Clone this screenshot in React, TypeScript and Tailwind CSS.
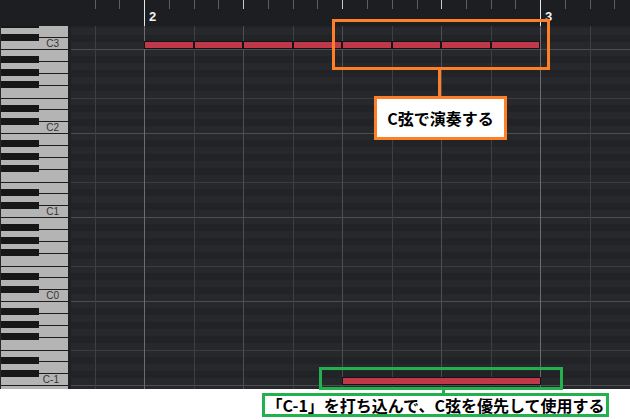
const OCTAVES = [3, 2, 1, 0, -1, -2]

// semitone rows of one octave, top to bottom
const ROWS = [
  { name: 'B', black: false },
  { name: 'A#', black: true },
  { name: 'A', black: false },
  { name: 'G#', black: true },
  { name: 'G', black: false },
  { name: 'F#', black: true },
  { name: 'F', black: false },
  { name: 'E', black: false },
  { name: 'D#', black: true },
  { name: 'D', black: false },
  { name: 'C#', black: true },
  { name: 'C', black: false },
]

const WHITE_KEYS = [
  { name: 'B', h: 'h-[12px]' },
  { name: 'A', h: 'h-[12px]' },
  { name: 'G', h: 'h-[12px]' },
  { name: 'F', h: 'h-[13px]' },
  { name: 'E', h: 'h-[11px]' },
  { name: 'D', h: 'h-[12px]' },
  { name: 'C', h: 'h-[12px]' },
]

const BLACK_KEYS = ['top-[7px]', 'top-[20px]', 'top-[32px]', 'top-[56px]', 'top-[69px]']

// grid columns (8th notes), first line at x=95, grid starts at x=71
const GRID_LEFT = 71
const COLUMNS = [
  { w: 'w-[49px]', line: 'border-[#3d3f43]' },
  { w: 'w-[50px]', line: 'border-[#6a6c70]' },
  { w: 'w-[49px]', line: 'border-[#3d3f43]' },
  { w: 'w-[50px]', line: 'border-[#4b4e52]' },
  { w: 'w-[49px]', line: 'border-[#3d3f43]' },
  { w: 'w-[50px]', line: 'border-[#4b4e52]' },
  { w: 'w-[49px]', line: 'border-[#3d3f43]' },
  { w: 'w-[50px]', line: 'border-[#4b4e52]' },
  { w: 'w-[49px]', line: 'border-[#3d3f43]' },
  { w: 'w-[50px]', line: 'border-[#6a6c70]' },
  { w: 'flex-1', line: 'border-[#3d3f43]' },
]

// ruler: 16th ticks from x=95
type Tick = { w: string; kind: 'minor' | 'beat' | 'bar'; label?: string }
const TICKS: Tick[] = [
  { w: 'w-[24px]', kind: 'minor' },
  { w: 'w-[25px]', kind: 'minor' },
  { w: 'w-[25px]', kind: 'bar', label: '2' },
  { w: 'w-[25px]', kind: 'minor' },
  { w: 'w-[24px]', kind: 'minor' },
  { w: 'w-[25px]', kind: 'minor' },
  { w: 'w-[25px]', kind: 'beat' },
  { w: 'w-[25px]', kind: 'minor' },
  { w: 'w-[24px]', kind: 'minor' },
  { w: 'w-[25px]', kind: 'minor' },
  { w: 'w-[25px]', kind: 'beat' },
  { w: 'w-[25px]', kind: 'minor' },
  { w: 'w-[25px]', kind: 'minor' },
  { w: 'w-[24px]', kind: 'minor' },
  { w: 'w-[25px]', kind: 'beat' },
  { w: 'w-[25px]', kind: 'minor' },
  { w: 'w-[24px]', kind: 'minor' },
  { w: 'w-[25px]', kind: 'minor' },
  { w: 'w-[25px]', kind: 'bar', label: '3' },
  { w: 'w-[25px]', kind: 'minor' },
  { w: 'w-[24px]', kind: 'minor' },
  { w: 'flex-1', kind: 'minor' },
]

// C3 row notes (start/end page x)
const C3_NOTES = [
  [144, 194],
  [194, 243],
  [243, 293],
  [293, 342],
  [342, 392],
  [392, 441],
  [441, 491],
  [491, 540],
]

function KeyOctave({ octave }: { octave: number }) {
  return (
    <div className="relative h-[84px]">
      <div className="flex h-full flex-col">
        {WHITE_KEYS.map((k) => (
          <div
            key={k.name}
            className={`${k.h} flex shrink-0 items-center justify-end border-t border-[#1c1c1c] bg-[#b4b4b4] pr-[9px]`}
          >
            {k.name === 'C' && octave > -2 && (
              <span className="font-['Liberation_Sans',sans-serif] text-[10px] leading-none text-[#333]">
                C{octave}
              </span>
            )}
          </div>
        ))}
      </div>
      {BLACK_KEYS.map((top) => (
        <div key={top} className={`absolute left-0 ${top} h-[7px] w-[38px] bg-[#171717]`} />
      ))}
    </div>
  )
}

function GridOctave() {
  return (
    <div className="flex h-[84px] flex-col">
      {ROWS.map((r) => (
        <div
          key={r.name}
          className={`h-[7px] shrink-0 ${r.black ? 'bg-[#212326]' : 'bg-[#26282b]'} ${
            r.name === 'B' ? 'border-t border-[#4c4e52]' : ''
          } ${r.name === 'E' ? 'border-t border-[#3b3d41]' : ''}`}
        />
      ))}
    </div>
  )
}

function Note({ from, to, top }: { from: number; to: number; top: number }) {
  return (
    <div
      className="absolute h-[8px] border border-[#141416] bg-[#c0394b]"
      style={{ left: from - GRID_LEFT, width: to - from, top }}
    />
  )
}

function Ruler() {
  return (
    <div className="flex h-[26px] w-full shrink-0 bg-[#1d1e21] pl-[95px]">
      {TICKS.map((t, i) => (
        <div key={i} className={`${t.w} flex shrink-0 items-start`}>
          {t.kind === 'bar' ? (
            <>
              <div className="h-[26px] w-px bg-[#e6e6e6]" />
              <span className="pl-[4px] pt-[9px] font-['Liberation_Sans',sans-serif] text-[13px] font-bold leading-[16px] text-[#f2f2f2]">
                {t.label}
              </span>
            </>
          ) : (
            <div className={`h-[9px] w-px ${t.kind === 'beat' ? 'bg-[#c9c9c9]' : 'bg-[#5b5d61]'}`} />
          )}
        </div>
      ))}
    </div>
  )
}

export default function App() {
  return (
    <div className="relative h-[420px] w-[630px] overflow-hidden bg-white">
      {/* piano roll */}
      <div className="flex h-[389px] flex-col bg-[#1d1e21]">
        <Ruler />
        <div className="flex h-[363px]">
          <div className="w-px bg-[#26272a]" />
          {/* keyboard */}
          <div className="relative w-[67px] overflow-hidden">
            <div className="-mt-[61px]">
              {OCTAVES.map((o) => (
                <KeyOctave key={o} octave={o} />
              ))}
            </div>
          </div>
          <div className="w-[3px] bg-[#1f2124]" />
          {/* note grid */}
          <div className="relative flex-1 overflow-hidden">
            <div className="-mt-[61px]">
              {OCTAVES.map((o) => (
                <GridOctave key={o} />
              ))}
            </div>
            <div className="absolute inset-0 flex pl-[24px]">
              {COLUMNS.map((c, i) => (
                <div key={i} className={`${c.w} h-full shrink-0 border-l ${c.line}`} />
              ))}
            </div>
            {C3_NOTES.map(([a, b]) => (
              <Note key={a} from={a} to={b} top={15} />
            ))}
            <Note from={342} to={541} top={351} />
          </div>
        </div>
      </div>

      {/* orange callout */}
      <div className="absolute left-[332px] top-[19px] h-[51px] w-[218px] border-[3px] border-[#ff7f27]" />
      <div className="absolute left-[438px] top-[70px] h-[26px] w-[3px] bg-[#ff7f27]" />
      <div className="absolute left-[374px] top-[96px] flex h-[44px] w-[133px] items-center justify-center border-[3px] border-[#ff7f27] bg-white">
        <span className="font-['Noto_Sans_CJK_JP',sans-serif] text-[16px] font-bold leading-none whitespace-nowrap text-black">
          C弦で演奏する
        </span>
      </div>

      {/* green callout */}
      <div className="absolute left-[319px] top-[367px] h-[23px] w-[244px] border-[3px] border-[#22b14c]" />
      <div className="absolute left-[442px] top-[390px] h-[4px] w-[3px] bg-[#22b14c]" />
      <div className="absolute left-[262px] top-[393px] flex h-[24px] w-[347px] items-center justify-center border-[3px] border-[#22b14c] bg-white">
        <span className="font-['Noto_Sans_CJK_JP',sans-serif] text-[16px] font-bold leading-none whitespace-nowrap text-black">
          「C-1」を打ち込んで、C弦を優先して使用する
        </span>
      </div>
    </div>
  )
}
